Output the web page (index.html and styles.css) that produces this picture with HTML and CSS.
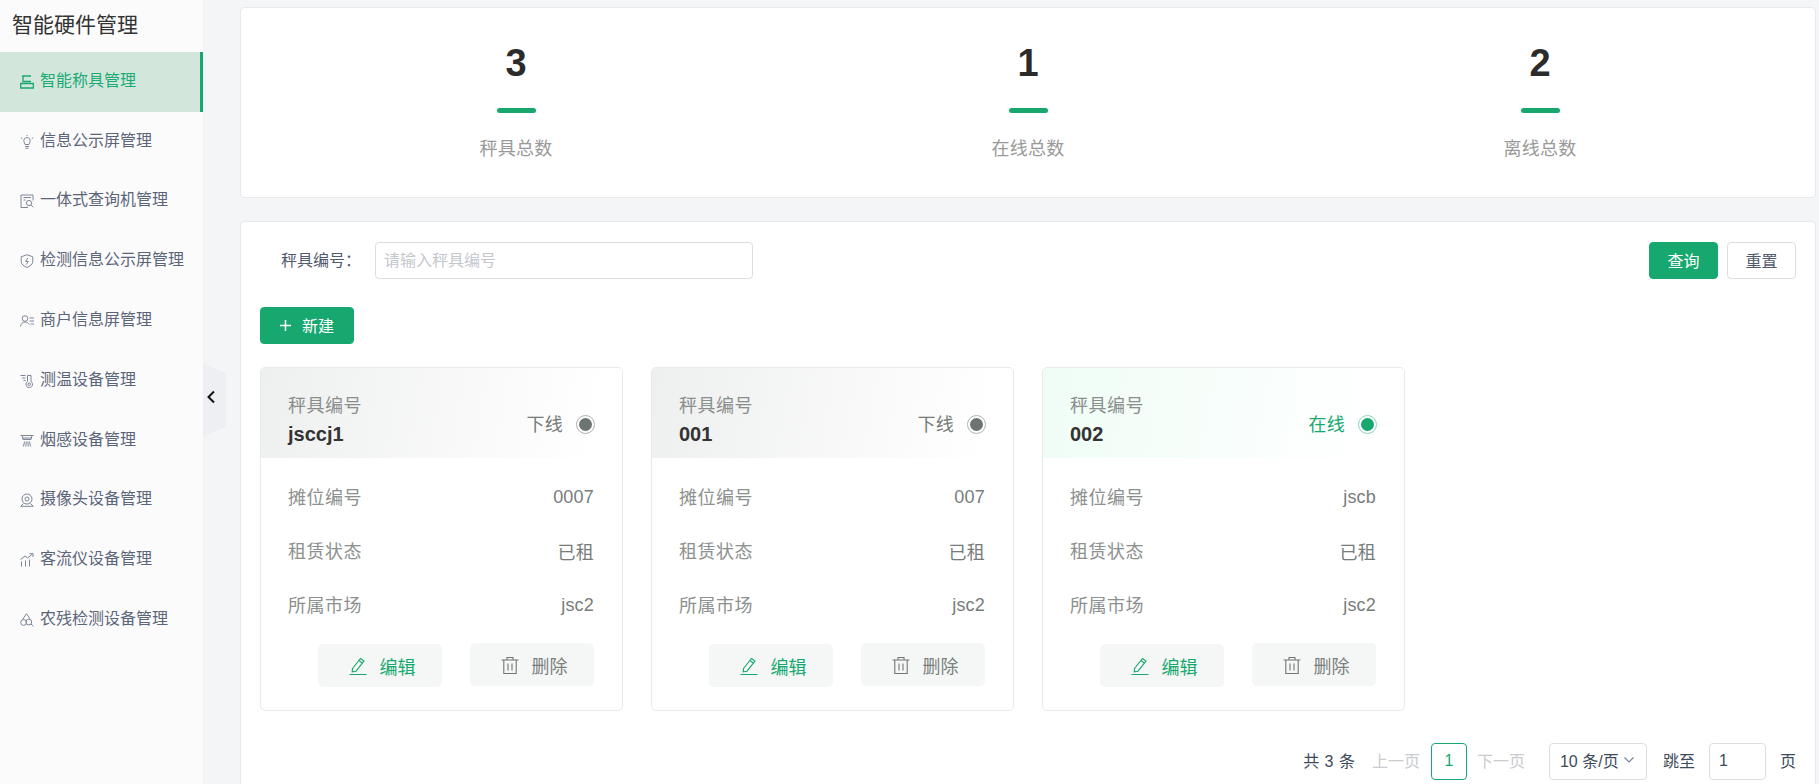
FILE: index.html
```html
<!DOCTYPE html>
<html lang="zh-CN">
<head>
<meta charset="utf-8">
<title>智能硬件管理</title>
<link rel="stylesheet" href="styles.css">
</head>
<body>
<div class="app">
  <aside class="sidebar">
    <div class="brand">智能硬件管理</div>
    <nav class="menu">
      <a class="menu-item active"><svg class="mi" viewBox="0 0 14 14"><path d="M2 1h9M3 1v5.500h8M.7 8.500h12.600v4.500H.7z"/></svg><span>智能称具管理</span></a>
      <a class="menu-item"><svg class="mi" viewBox="0 0 14 14"><path d="M4.200 7.200a3.200 3.200 0 1 1 5.600 0L9 9.500H5zM5 11.500h4M5.500 13.300h3M.8 2.800l1.400.8M13.200 2.800l-1.400.8M7 0v1"/></svg><span>信息公示屏管理</span></a>
      <a class="menu-item"><svg class="mi" viewBox="0 0 14 14"><path d="M13 6.500V1H1v12.500h7M3.500 3.500h7.500M3.500 6h2"/><circle cx="9" cy="9" r="2.600"/><path d="M11 11l2.300 2.300"/></svg><span>一体式查询机管理</span></a>
      <a class="menu-item"><svg class="mi" viewBox="0 0 14 14"><path d="M7 .7l5.800 2.100v4.500c0 2.900-2.700 5-5.800 6.100-3.100-1.100-5.800-3.200-5.800-6.100V2.800zM7.800 4L5.700 7.500h2.600L6.200 10.500"/></svg><span>检测信息公示屏管理</span></a>
      <a class="menu-item"><svg class="mi" viewBox="0 0 14 14"><circle cx="5" cy="4.500" r="2.800"/><path d="M.5 12.500c.4-2.800 2.300-4.500 4.500-4.500s3.600 1 4.200 2.600M9.500 4h4.500M9.500 7h4.500M10.500 10h3.500"/></svg><span>商户信息屏管理</span></a>
      <a class="menu-item"><svg class="mi" viewBox="0 0 14 14"><path d="M.5 1.500h5M2 4h3.500M3.500 6.500h2M7.500 7.500V1.500h3.500v6"/><path d="M7.500 7.500a3.300 3.300 0 1 0 3.500 0"/><circle cx="9.200" cy="10.200" r="1.300"/></svg><span>测温设备管理</span></a>
      <a class="menu-item"><svg class="mi" viewBox="0 0 14 14"><path d="M.5 1.500h13M2 1.500l1 4h8l1-4M2 4h10M4.500 7.500l-1 5M6.300 7.500l-.5 5M7.800 7.500l.5 5M9.500 7.500l1 5"/></svg><span>烟感设备管理</span></a>
      <a class="menu-item"><svg class="mi" viewBox="0 0 14 14"><circle cx="7" cy="6" r="5"/><circle cx="7" cy="6" r="2"/><path d="M3.500 10.500L.7 13.300h12.600L10.500 10.500"/></svg><span>摄像头设备管理</span></a>
      <a class="menu-item"><svg class="mi" viewBox="0 0 14 14"><path d="M1.500 8.500V13.500M5.500 7.500V13.500M9.500 6.500V13.500M.5 6.500L5 3l2.500 2L12.500 1M9.500 .7h3.500V4"/></svg><span>客流仪设备管理</span></a>
      <a class="menu-item"><svg class="mi" viewBox="0 0 14 14"><path d="M6.500.7L2.500 6.700M6.500.7l3.500 5"/><circle cx="3.600" cy="9.500" r="2.900"/><circle cx="8.800" cy="9" r="2.900"/><path d="M11 11l2.500 2.300"/></svg><span>农残检测设备管理</span></a>
    </nav>
    <button class="collapse" type="button" aria-label="收起"><svg viewBox="0 0 10 14" class="collapse-icon"><path d="M8 1.500L2.500 7 8 12.500"/></svg></button>
  </aside>

  <main class="main">
    <section class="panel stats">
      <div class="stat"><div class="stat-num">3</div><div class="stat-bar"></div><div class="stat-label">秤具总数</div></div>
      <div class="stat"><div class="stat-num">1</div><div class="stat-bar"></div><div class="stat-label">在线总数</div></div>
      <div class="stat"><div class="stat-num">2</div><div class="stat-bar"></div><div class="stat-label">离线总数</div></div>
    </section>

    <section class="panel content">
      <div class="filter">
        <label class="filter-label">秤具编号：</label>
        <input class="filter-input" type="text" placeholder="请输入秤具编号">
        <div class="filter-actions">
          <button class="btn primary" type="button">查询</button>
          <button class="btn ghost" type="button">重置</button>
        </div>
      </div>

      <button class="btn primary add" type="button"><svg class="plus" viewBox="0 0 11 11"><path d="M5.500 0v11M0 5.500h11"/></svg>新建</button>

      <div class="cards">
        <article class="card">
          <header class="card-head off">
            <div class="head-left"><div class="head-label">秤具编号</div><div class="head-id">jsccj1</div></div>
            <div class="status off-text"><span>下线</span><i class="dot off-dot"></i></div>
          </header>
          <div class="rows">
            <div class="row"><span>摊位编号</span><b>0007</b></div>
            <div class="row"><span>租赁状态</span><b>已租</b></div>
            <div class="row"><span>所属市场</span><b>jsc2</b></div>
          </div>
          <div class="actions">
            <button class="act edit" type="button"><svg class="act-icon" viewBox="0 0 18 18"><path d="M3.500 11.500L11.500 1.500l3.500 2.700-8 10-3.800.7zM10 3.500l3.500 2.700M.5 17.500h17"/></svg>编辑</button>
            <button class="act del" type="button"><svg class="act-icon" viewBox="0 0 18 18"><path d="M.5 4h17M6 4V1.500h6V4M2.800 4v13.500h12.400V4M7 7.500v7M11 7.500v7"/></svg>删除</button>
          </div>
        </article>

        <article class="card">
          <header class="card-head off">
            <div class="head-left"><div class="head-label">秤具编号</div><div class="head-id">001</div></div>
            <div class="status off-text"><span>下线</span><i class="dot off-dot"></i></div>
          </header>
          <div class="rows">
            <div class="row"><span>摊位编号</span><b>007</b></div>
            <div class="row"><span>租赁状态</span><b>已租</b></div>
            <div class="row"><span>所属市场</span><b>jsc2</b></div>
          </div>
          <div class="actions">
            <button class="act edit" type="button"><svg class="act-icon" viewBox="0 0 18 18"><path d="M3.500 11.500L11.500 1.500l3.500 2.700-8 10-3.800.7zM10 3.500l3.500 2.700M.5 17.500h17"/></svg>编辑</button>
            <button class="act del" type="button"><svg class="act-icon" viewBox="0 0 18 18"><path d="M.5 4h17M6 4V1.500h6V4M2.800 4v13.500h12.400V4M7 7.500v7M11 7.500v7"/></svg>删除</button>
          </div>
        </article>

        <article class="card">
          <header class="card-head on">
            <div class="head-left"><div class="head-label">秤具编号</div><div class="head-id">002</div></div>
            <div class="status on-text"><span>在线</span><i class="dot on-dot"></i></div>
          </header>
          <div class="rows">
            <div class="row"><span>摊位编号</span><b>jscb</b></div>
            <div class="row"><span>租赁状态</span><b>已租</b></div>
            <div class="row"><span>所属市场</span><b>jsc2</b></div>
          </div>
          <div class="actions">
            <button class="act edit" type="button"><svg class="act-icon" viewBox="0 0 18 18"><path d="M3.500 11.500L11.500 1.500l3.500 2.700-8 10-3.800.7zM10 3.500l3.500 2.700M.5 17.500h17"/></svg>编辑</button>
            <button class="act del" type="button"><svg class="act-icon" viewBox="0 0 18 18"><path d="M.5 4h17M6 4V1.500h6V4M2.800 4v13.500h12.400V4M7 7.500v7M11 7.500v7"/></svg>删除</button>
          </div>
        </article>
      </div>

      <div class="pager">
        <span class="total">共 3 条</span>
        <span class="page-link prev">上一页</span>
        <span class="page-num">1</span>
        <span class="page-link">下一页</span>
        <span class="page-size">10 条/页<svg class="caret" viewBox="0 0 10 6"><path d="M.5.500L5 5 9.500.500"/></svg></span>
        <span class="jump">跳至</span>
        <span class="jump-input">1</span>
        <span class="jump-end">页</span>
      </div>
    </section>
  </main>
</div>
</body>
</html>
```
FILE: styles.css
```css
* { box-sizing: border-box; }
html, body { margin: 0; height: 100%; }
body {
  font-family: "Liberation Sans", "Noto Sans CJK SC", sans-serif;
  font-size: 16px;
  background: #f4f5f7;
  overflow: hidden;
}
button { font-family: inherit; cursor: pointer; }

.app { display: flex; height: 784px; overflow: hidden; }

.sidebar {
  position: relative;
  flex: 0 0 203px;
  background: #fbfbfc;
}
.brand {
  height: 52px;
  padding-left: 12px;
  font-size: 21px;
  line-height: 50px;
  color: #333;
}
.menu-item {
  display: flex;
  align-items: center;
  gap: 6px;
  height: 59.8px;
  padding-left: 20px;
  color: #5b6579;
  font-size: 16px;
}
.menu-item span { padding-bottom: 6px; }
.menu-item.active {
  background: #d3e6db;
  color: #1bab75;
  border-right: 3px solid #17a86f;
}
.mi {
  width: 14px;
  height: 14px;
  flex: none;
  fill: none;
  stroke: #7f8698;
  stroke-width: 1;
}
.active .mi { stroke: #17a86f; stroke-width: 1.3; }

.collapse {
  position: absolute;
  top: 363px;
  left: 203px;
  width: 23px;
  height: 74px;
  padding: 0 0 6px 3px;
  border: 0;
  background: #eeeff2;
  clip-path: polygon(0 0, 100% 14%, 100% 86%, 0 100%);
  display: flex;
  align-items: center;
}
.collapse-icon {
  width: 10px;
  height: 14px;
  fill: none;
  stroke: #111;
  stroke-width: 2;
}

.main {
  flex: 1;
  min-width: 0;
  padding: 7px 3px 0 37px;
  display: flex;
  flex-direction: column;
  gap: 23px;
}
.panel {
  background: #fff;
  border: 1px solid #e8e9ec;
  border-radius: 4px;
}
.stats {
  flex: none;
  height: 191px;
  padding-top: 32px;
  display: grid;
  grid-template-columns: repeat(3, 512px);
  justify-content: center;
}
.stat { display: flex; flex-direction: column; align-items: center; }
.stat-num {
  font-size: 38px;
  font-weight: 700;
  line-height: 46px;
  color: #2b2b2b;
}
.stat-bar {
  width: 39px;
  height: 5px;
  margin-top: 22px;
  border-radius: 3px;
  background: #17a86f;
}
.stat-label {
  margin-top: 23px;
  font-size: 18px;
  line-height: 26px;
  letter-spacing: .3px;
  color: #999;
}

.content {
  flex: none;
  height: 640px;
  padding: 20px 19px 0 19px;
}
.filter { display: flex; align-items: center; height: 37px; }
.filter-label {
  width: 115px;
  padding: 0 0 4px 21px;
  flex: none;
  color: #515a6e;
  font-size: 16px;
}
.filter-input {
  width: 378px;
  height: 37px;
  padding: 0 8px;
  border: 1px solid #dcdee2;
  border-radius: 4px;
  font-family: inherit;
  font-size: 16px;
}
.filter-input::placeholder { color: #c5c8ce; }
.filter-actions { margin-left: auto; display: flex; gap: 9px; }

.btn {
  height: 37px;
  width: 69px;
  padding: 0 0 2px;
  border-radius: 4px;
  font-size: 16px;
}
.btn.primary { background: #17a86f; border: 1px solid #17a86f; color: #fff; }
.btn.ghost { background: #fff; border: 1px solid #dcdee2; color: #515a6e; }
.btn.add {
  display: flex;
  align-items: center;
  justify-content: center;
  gap: 11px;
  width: 94px;
  margin-top: 28px;
}
.plus { width: 11px; height: 11px; margin-top: 2px; fill: none; stroke: #fff; stroke-width: 1.5; }

.cards {
  display: grid;
  grid-template-columns: repeat(4, 363px);
  gap: 28px;
  margin-top: 23px;
}
.card {
  height: 344px;
  border: 1px solid #e8e9ec;
  border-radius: 5px;
  overflow: hidden;
}
.card-head {
  height: 90px;
  padding: 25px 27px 0 27px;
  display: flex;
  justify-content: space-between;
  align-items: flex-start;
}
.card-head.off { background: linear-gradient(100deg, #eeefef 0%, #fff 92%); }
.card-head.on { background: linear-gradient(100deg, #effdf6 0%, #fff 92%); }
.head-label { font-size: 18px; line-height: 26px; letter-spacing: .5px; color: #8a8f8d; }
.head-id { font-size: 20px; font-weight: 700; line-height: 30px; color: #333; }
.status {
  display: flex;
  align-items: center;
  gap: 13px;
  margin-top: 19px;
  font-size: 18px;
  line-height: 26px;
  letter-spacing: .3px;
}
.off-text { color: #757a78; }
.on-text { color: #17a86f; }
.dot {
  position: relative;
  display: block;
  width: 19px;
  height: 19px;
  margin-bottom: 2px;
  border-radius: 50%;
  border: 1px solid;
  background-clip: padding-box;
}
.dot::after {
  content: "";
  position: absolute;
  inset: 2px;
  border-radius: 50%;
}
.off-dot { border-color: #b0b0b0; }
.off-dot::after { background: #6c7572; }
.on-dot { border-color: #8fd4b8; }
.on-dot::after { background: #17a86f; }

.rows { padding: 11px 28px 0 27px; }
.row {
  height: 54px;
  display: flex;
  justify-content: space-between;
  align-items: center;
  font-size: 18px;
  letter-spacing: .5px;
  color: #8c908e;
}
.row b { padding-top: 2px; font-weight: 400; letter-spacing: .2px; color: #777c7a; }

.actions {
  display: flex;
  justify-content: flex-end;
  gap: 28px;
  padding: 12px 28px 0 0;
}
.act {
  display: flex;
  align-items: center;
  justify-content: center;
  gap: 13px;
  width: 124px;
  height: 43px;
  padding: 0 0 0 4px;
  border: 0;
  border-radius: 5px;
  background: #f5f7f6;
  font-size: 18px;
}
.act.edit { margin-top: 1px; color: #17a86f; }
.act.del { color: #7a7f7d; }
.act-icon { width: 18px; height: 18px; fill: none; stroke-width: 1.1; flex: none; }
.edit .act-icon { stroke: #17a86f; }
.del .act-icon { stroke: #6f7573; }

.pager {
  display: flex;
  align-items: center;
  justify-content: flex-end;
  height: 37px;
  margin-top: 32px;
  color: #3d4a5c;
  font-size: 16px;
}
.page-link { color: #c9cbcf; margin: 0 10px; padding-bottom: 3px; }
.page-link.prev { margin-right: 11px; }
.total { margin-right: 7px; padding-bottom: 3px; word-spacing: 1px; }
.page-num {
  width: 36px;
  height: 37px;
  line-height: 33px;
  text-align: center;
  border: 1px solid #17a86f;
  border-radius: 4px;
  color: #17a86f;
}
.page-size {
  display: flex;
  align-items: center;
  gap: 5px;
  width: 98px;
  height: 37px;
  margin-left: 14px;
  padding: 0 0 3px 10px;
  border: 1px solid #dcdee2;
  border-radius: 4px;
}
.caret { width: 10px; height: 6px; fill: none; stroke: #7b8494; stroke-width: 1.2; }
.jump { margin-left: 16px; padding-bottom: 3px; }
.jump-input {
  width: 57px;
  height: 37px;
  line-height: 33px;
  margin-left: 14px;
  padding-left: 9px;
  border: 1px solid #dcdee2;
  border-radius: 4px;
}
.jump-end { margin-left: 14px; padding-bottom: 3px; }
```
